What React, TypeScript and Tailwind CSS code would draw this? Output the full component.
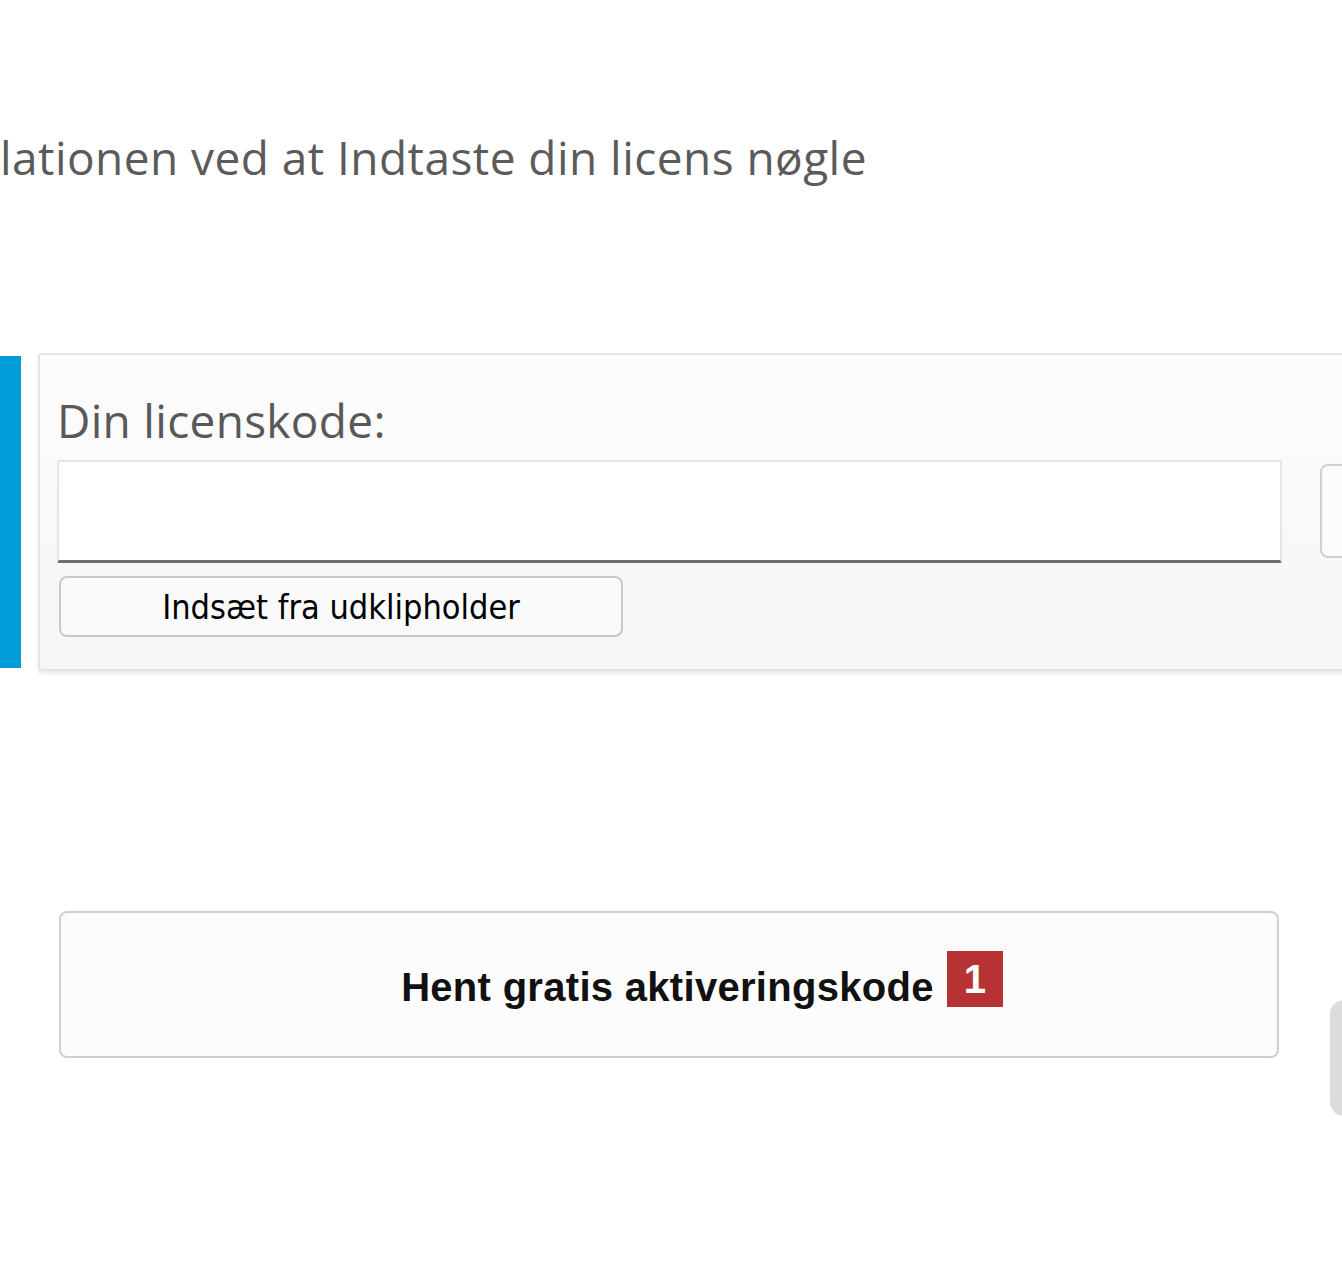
import React from 'react';

const App: React.FC = () => {
  return (
    <div className="relative w-[1342px] h-[1264px] overflow-hidden bg-white">
      <div className="pt-[127px] h-[353px]">
        <p className="whitespace-nowrap text-[46px] leading-[60px] text-[#5b5b5b] font-['Open_Sans',sans-serif] tracking-[0.45px]">
          lationen ved at Indtaste din licens nøgle
        </p>
      </div>

      <div className="flex w-[1400px]">
        <div className="mt-[3px] w-[21px] h-[312px] bg-[#009bd9] shrink-0" />
        <div className="ml-[17px] w-[1360px] shrink-0 h-[318px] border-2 border-[#e4e4e4] rounded-l-[3px] bg-gradient-to-b from-[#fcfcfc] to-[#f6f6f6] shadow-[0_3px_4px_rgba(0,0,0,0.08)] pl-[17px] pt-[35px]">
          <label
            htmlFor="license"
            className="block text-[46px] leading-[60px] text-[#585858] font-['Open_Sans',sans-serif] tracking-[0.3px]"
          >
            Din licenskode:
          </label>
          <div className="flex items-start mt-[10px]">
            <input
              id="license"
              type="text"
              className="shrink-0 w-[1225px] h-[103px] bg-white border-2 border-[#e6e6e6] border-b-[3px] border-b-[#6e6e6e] rounded-[2px] outline-none"
            />
            <div className="shrink-0 ml-[38px] mt-[4px] w-[120px] h-[94px] border-2 border-[#cfcfcf] rounded-[8px] bg-[#fbfbfb]" />
          </div>
          <button
            type="button"
            className="mt-[13px] ml-[2px] w-[564px] h-[61px] border-2 border-[#c8c8c8] rounded-[8px] bg-[#fafafa] text-[34px] leading-none text-black font-['Liberation_Sans_Narrow','DejaVu_Sans_Condensed',sans-serif] flex items-center justify-center"
          >
            Indsæt fra udklipholder
          </button>
        </div>
      </div>

      <div className="mt-[240px] ml-[59px]">
        <button
          type="button"
          className="w-[1220px] h-[147px] border-2 border-[#cfcfcf] rounded-[8px] bg-[#fcfcfc] flex items-center justify-center gap-[13px] pl-[66px]"
        >
          <span className="text-[40px] font-bold text-[#111] font-['Liberation_Sans',sans-serif] tracking-[0.3px] mt-[4px]">
            Hent gratis aktiveringskode
          </span>
          <span className="w-[56px] h-[56px] bg-[#b73333] text-white text-[40px] font-bold leading-none flex items-center justify-center font-['Liberation_Sans',sans-serif] -mt-[12px]">
            1
          </span>
        </button>
      </div>

      <div className="absolute left-[1330px] top-[1000px] w-[40px] h-[116px] rounded-l-[14px] bg-[#dcdcdc]" />
    </div>
  );
};

export default App;
